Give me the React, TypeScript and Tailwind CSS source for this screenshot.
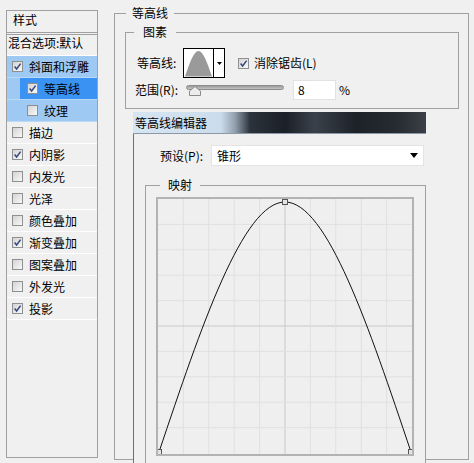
import React from "react";

type StyleRow = {
  name: string
  on: boolean
  sub?: boolean
  tone?: "sel" | "active"
};

const rows: StyleRow[] = [
  { name: "斜面和浮雕", on: true, tone: "sel" },
  { name: "等高线", on: true, sub: true, tone: "active" },
  { name: "纹理", on: false, sub: true, tone: "sel" },
  { name: "描边", on: false },
  { name: "内阴影", on: true },
  { name: "内发光", on: false },
  { name: "光泽", on: false },
  { name: "颜色叠加", on: false },
  { name: "渐变叠加", on: true },
  { name: "图案叠加", on: false },
  { name: "外发光", on: false },
  { name: "投影", on: true },
];

const Check = ({ on }: { on: boolean }) => (
  <span className="flex h-[11px] w-[11px] shrink-0 items-center justify-center border border-[#8e8f8f] bg-linear-to-br from-[#d4d4d4] to-[#f8f8f8]">
    {on && (
      <svg viewBox="0 0 9 9" className="h-[9px] w-[9px]">
        <path d="M1.6 4.6 L3.6 7 L7.6 1.6" stroke="#34457f" strokeWidth="1.5" fill="none" />
      </svg>
    )}
  </span>
);

const StyleList = () => (
  <div className="ml-[6px] mt-[10px] flex h-[448px] w-[92px] flex-col border border-[#a0a0a0] bg-[#f0f0f0]">
    <div className="h-[22px] border-b border-[#a0a0a0] pl-[6px] leading-[17px]">样式</div>
    <div className="mt-[1px] border-t border-[#a0a0a0]">
      <div className="h-[21px] border-b border-white pl-[1px] leading-[16px]">混合选项:默认</div>
      {rows.map((r) => (
        <div
          key={r.name}
          className={`flex h-[22px] border-b ${r.tone ? "border-[#b9daf7] bg-[#9ec9f2]" : "border-white"}`}
        >
          <div
            className={`flex flex-1 items-center gap-[6px] ${r.sub ? "ml-[13px] pl-[7px]" : "pl-[5px]"} ${
              r.tone === "active" ? "bg-[#3a92f2]" : ""
            }`}
          >
            <Check on={r.on} />
            <span className="leading-none">{r.name}</span>
          </div>
        </div>
      ))}
    </div>
  </div>
);

const ContourThumb = () => (
  <div className="flex h-[30px] w-[42px] shrink-0 border border-black bg-white">
    <svg viewBox="0 0 30 28" className="h-[28px] w-[29px]">
      <path d="M1 28 C5.5 15, 10 1.5, 15 1.5 C20 1.5, 24.5 15, 29 28 Z" fill="#9a9a9a" />
    </svg>
    <div className="flex flex-1 items-center justify-center border-l border-black">
      <svg viewBox="0 0 5 3" className="h-[3px] w-[5px]">
        <path d="M0 0 H5 L2.5 3 Z" fill="#000" />
      </svg>
    </div>
  </div>
);

const Slider = () => (
  <div className="relative h-[14px] w-[98px] shrink-0">
    <div className="mt-[2px] h-[5px] w-full rounded-full border border-[#8c8c8c] bg-linear-to-b from-[#9a9a9a] to-[#c4c4c4]" />
    <svg viewBox="0 0 12 10" className="absolute left-[3px] top-[3px] h-[10px] w-[12px]">
      <path d="M6 0.5 L11.5 5 V9.5 H0.5 V5 Z" fill="#ececec" stroke="#8a8a8a" strokeWidth="1" />
    </svg>
  </div>
);

const CurveGrid = () => {
  const lines = Array.from({ length: 9 }, (_, i) => (i + 1) * 25.4);
  return (
    <div className="ml-[10px] mt-[4px] h-[259px] w-[258px] border-2 border-[#b3b3b3] bg-[#efefef]">
      <svg viewBox="0 0 254 255" className="h-[255px] w-[254px]">
        {lines.map((p, i) => (
          <g key={p} stroke={i === 4 ? "#c9c9c9" : "#e0e0e0"} strokeWidth="1">
            <line x1={p} y1="0" x2={p} y2="255" />
            <line x1="0" y1={p} x2="254" y2={p} />
          </g>
        ))}
        <path
          d="M1 253 C43 128, 85 3, 127 3 C169 3, 211 128, 253 253"
          stroke="#111"
          strokeWidth="1"
          fill="none"
        />
        {[
          [1, 253],
          [127, 3],
          [253, 253],
        ].map(([x, y]) => (
          <rect key={x} x={x - 2.5} y={y - 2.5} width="5" height="5" fill="#e4e4e4" stroke="#555" strokeWidth="1" />
        ))}
      </svg>
    </div>
  );
};

const ContourEditor = () => (
  <div className="absolute left-[133px] top-[112px] flex h-[351px] w-[293px] flex-col">
    <div className="h-[22px] border-b border-[#8b99a6] bg-[linear-gradient(to_right,#d6e5f2_0%,#cbdcec_30%,#8f9cab_35%,#2b323b_40%,#1b2028_52%,#3a414a_62%,#1d2229_76%,#262b32_90%,#3b4048_100%)] pl-[2px] leading-[21px]">
      等高线编辑器
    </div>
    <div className="flex-1 border-l border-[#66737f] bg-[#f0f0f0]">
      <div className="mt-[11px] flex items-center pl-[26px]">
        <span className="w-[51px] shrink-0 whitespace-nowrap leading-none">预设(P):</span>
        <div className="flex h-[21px] w-[213px] items-center justify-between border border-[#e4e4e4] bg-white pl-[5px] pr-[5px]">
          <span className="leading-none">锥形</span>
          <svg viewBox="0 0 8 5" className="h-[5px] w-[8px]">
            <path d="M0 0 H8 L4 5 Z" fill="#000" />
          </svg>
        </div>
      </div>
      <fieldset className="ml-[11px] mt-[11px] h-[300px] w-[281px] border border-[#a0a0a0]">
        <legend className="ml-[14px] px-[8px] leading-[16px]">映射</legend>
        <CurveGrid />
      </fieldset>
    </div>
  </div>
);

export default function App() {
  return (
    <div className="relative flex h-[463px] w-[474px] overflow-hidden bg-[#f0f0f0] font-['Noto_Sans_CJK_SC','Noto_Sans',sans-serif] text-[12px] text-black">
      <StyleList />
      <fieldset className="ml-[16px] mt-[5px] h-[455px] w-[355px] border border-[#a0a0a0]">
        <legend className="ml-[11px] px-[6px] leading-[16px]">等高线</legend>
        <fieldset className="ml-[10px] mt-[3px] w-[334px] border border-[#a0a0a0] pb-[8px]">
          <legend className="ml-[8px] px-[9px] leading-[16px]">图素</legend>
          <div className="mt-[8px] flex items-center pl-[11px]">
            <span className="w-[46px] shrink-0 whitespace-nowrap leading-none">等高线:</span>
            <ContourThumb />
            <label className="ml-[13px] flex items-center gap-[5px]">
              <Check on />
              <span className="whitespace-nowrap leading-none">消除锯齿(L)</span>
            </label>
          </div>
          <div className="mt-[2px] flex items-center pl-[9px]">
            <span className="w-[51px] shrink-0 whitespace-nowrap leading-none">范围(R):</span>
            <Slider />
            <div className="ml-[9px] h-[20px] w-[43px] shrink-0 border border-[#e2e2e2] bg-white pl-[4px] leading-[18px]">8</div>
            <span className="ml-[3px] leading-none">%</span>
          </div>
        </fieldset>
      </fieldset>
      <ContourEditor />
    </div>
  );
}
